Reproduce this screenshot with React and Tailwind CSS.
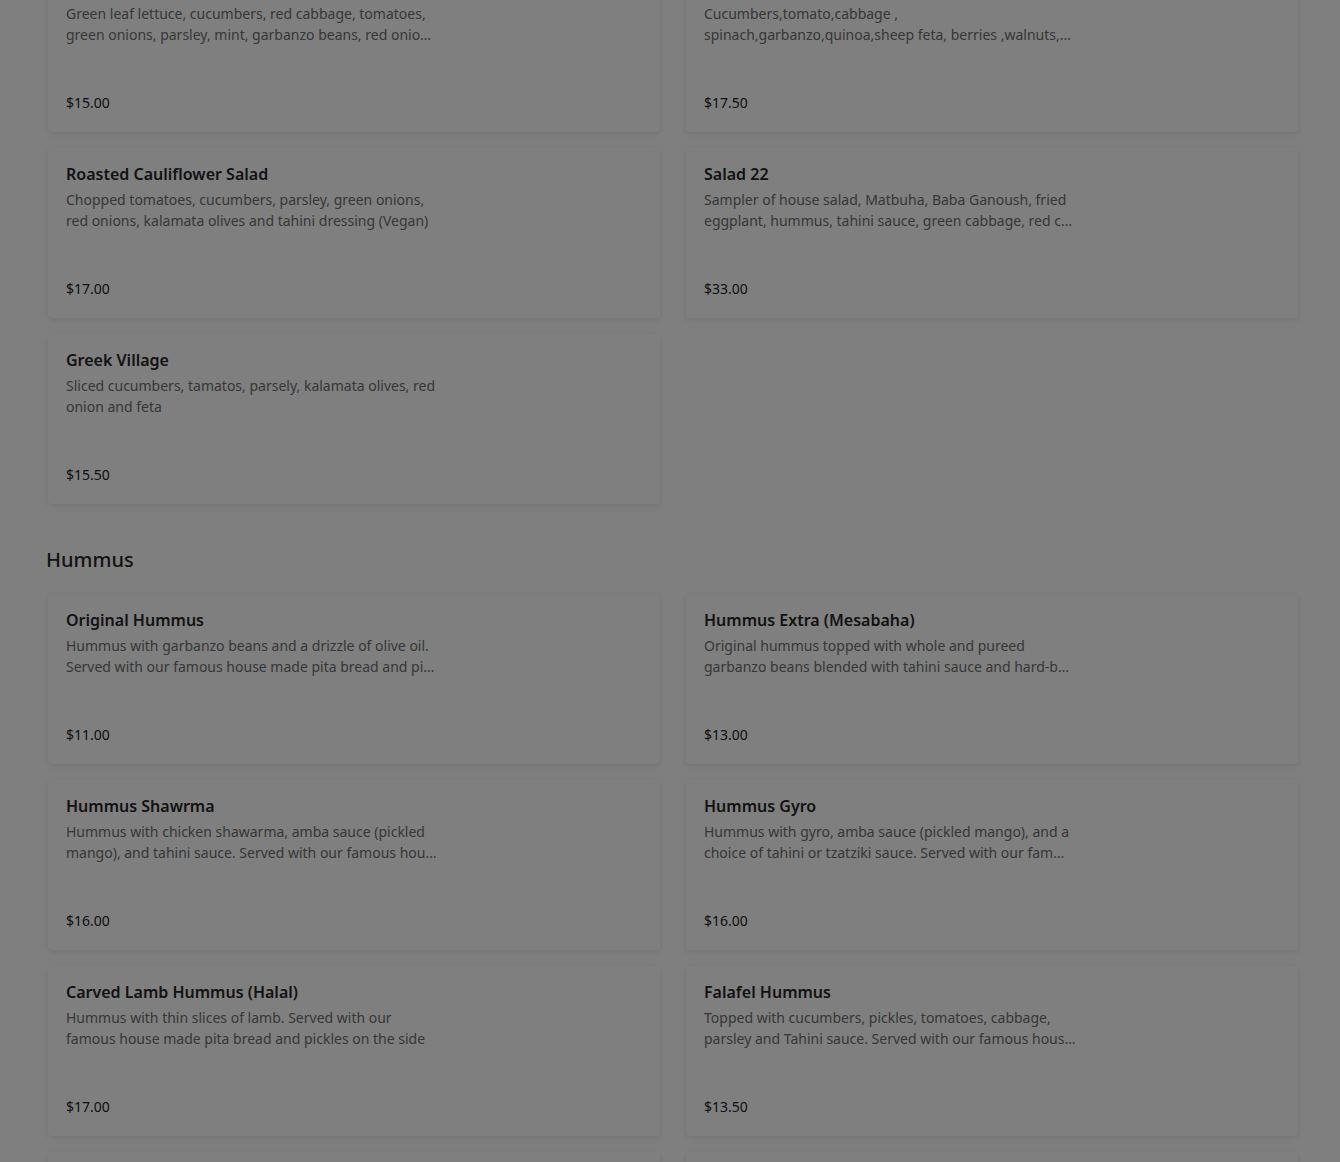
const salads = [
  {
    name: 'House Salad',
    desc: ['Green leaf lettuce, cucumbers, red cabbage, tomatoes,', 'green onions, parsley, mint, garbanzo beans, red onio…'],
    price: '$15.00',
  },
  {
    name: 'Quinoa Salad',
    desc: ['Cucumbers,tomato,cabbage ,', 'spinach,garbanzo,quinoa,sheep feta, berries ,walnuts,…'],
    price: '$17.50',
  },
  {
    name: 'Roasted Cauliflower Salad',
    desc: ['Chopped tomatoes, cucumbers, parsley, green onions,', 'red onions, kalamata olives and tahini dressing (Vegan)'],
    price: '$17.00',
  },
  {
    name: 'Salad 22',
    desc: ['Sampler of house salad, Matbuha, Baba Ganoush, fried', 'eggplant, hummus, tahini sauce, green cabbage, red c…'],
    price: '$33.00',
  },
  {
    name: 'Greek Village',
    desc: ['Sliced cucumbers, tamatos, parsely, kalamata olives, red', 'onion and feta'],
    price: '$15.50',
  },
]

const hummus = [
  {
    name: 'Original Hummus',
    desc: ['Hummus with garbanzo beans and a drizzle of olive oil.', 'Served with our famous house made pita bread and pi…'],
    price: '$11.00',
  },
  {
    name: 'Hummus Extra (Mesabaha)',
    desc: ['Original hummus topped with whole and pureed', 'garbanzo beans blended with tahini sauce and hard-b…'],
    price: '$13.00',
  },
  {
    name: 'Hummus Shawrma',
    desc: ['Hummus with chicken shawarma, amba sauce (pickled', 'mango), and tahini sauce. Served with our famous hou…'],
    price: '$16.00',
  },
  {
    name: 'Hummus Gyro',
    desc: ['Hummus with gyro, amba sauce (pickled mango), and a', 'choice of tahini or tzatziki sauce. Served with our fam…'],
    price: '$16.00',
  },
  {
    name: 'Carved Lamb Hummus (Halal)',
    desc: ['Hummus with thin slices of lamb. Served with our', 'famous house made pita bread and pickles on the side'],
    price: '$17.00',
  },
  {
    name: 'Falafel Hummus',
    desc: ['Topped with cucumbers, pickles, tomatoes, cabbage,', 'parsley and Tahini sauce. Served with our famous hous…'],
    price: '$13.50',
  },
  { name: 'Hummus Fries', desc: ['Hummus topped with fries'], price: '$12.00' },
  { name: 'Hummus Falafel Plate', desc: ['Hummus with falafel balls'], price: '$14.00' },
]

function ItemCard({ item }) {
  return (
    <div className="h-[170px] bg-white rounded-[4px] shadow-[0_2px_6px_rgba(0,0,0,0.1)] px-[18px] pt-[14px] pb-[19px] flex flex-col">
      <div className="text-[16px] leading-6 font-semibold text-[#262626]">{item.name}</div>
      <p className="mt-[3px] text-[14px] leading-[21px] text-[#6e6e6e]">
        {item.desc.map((line) => (
          <span key={line} className="block whitespace-nowrap">
            {line}
          </span>
        ))}
      </p>
      <div className="mt-auto text-[14px] leading-5 text-[#222]">{item.price}</div>
    </div>
  )
}

export default function App() {
  return (
    <div className="relative min-h-screen bg-white overflow-hidden" style={{ fontFamily: '"Noto Sans", Lato, sans-serif' }}>
      <div className="w-[1250px] ml-[48px] mt-[-38px] pb-10">
        <div className="grid grid-cols-2 gap-x-[26px] gap-y-[16px]">
          {salads.map((s) => (
            <ItemCard key={s.name} item={s} />
          ))}
        </div>

        <h2 className="-ml-[2px] mt-[42px] mb-[20px] text-[20px] leading-7 font-medium text-[#262626]">Hummus</h2>

        <div className="grid grid-cols-2 gap-x-[26px] gap-y-[16px]">
          {hummus.map((s) => (
            <ItemCard key={s.name} item={s} />
          ))}
        </div>
      </div>

      {/* modal backdrop */}
      <div className="fixed inset-0 bg-black/50" />
    </div>
  )
}
